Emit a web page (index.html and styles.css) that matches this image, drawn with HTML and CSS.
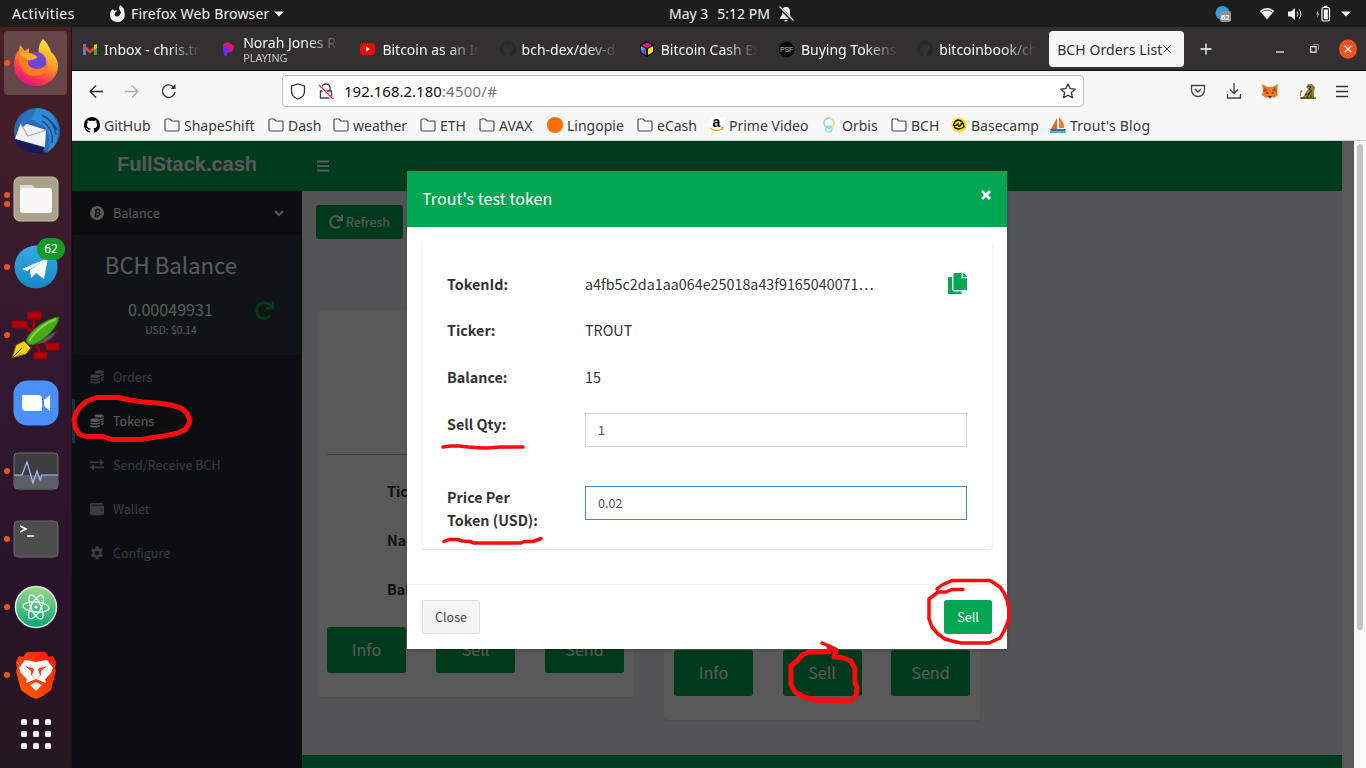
FILE: index.html
```html
<!DOCTYPE html>
<html lang="en">
<head>
<meta charset="utf-8">
<title>BCH Orders List</title>
<link rel="stylesheet" href="styles.css">
</head>
<body>
<svg class="defs" width="0" height="0" aria-hidden="true">
  <symbol id="folder" viewBox="0 0 16 16"><path d="M1 3.500Q1 2 2.500 2H6l2 2h5.500Q15 4 15 5.500v7q0 1.500-1.500 1.500h-11Q1 14 1 12.500z" fill="none" stroke="#4b4b50" stroke-width="1.200"/></symbol>
  <symbol id="github" viewBox="0 0 16 16"><path d="M8 0C3.58 0 0 3.58 0 8c0 3.54 2.29 6.53 5.47 7.59.4.07.55-.17.55-.38 0-.19-.01-.82-.01-1.49-2.01.37-2.53-.49-2.69-.94-.09-.23-.48-.94-.82-1.13-.28-.15-.68-.52-.01-.53.63-.01 1.08.58 1.23.82.72 1.21 1.87.87 2.33.66.07-.52.28-.87.51-1.07-1.78-.2-3.64-.89-3.64-3.95 0-.87.31-1.59.82-2.15-.08-.2-.36-1.02.08-2.12 0 0 .67-.21 2.2.82.64-.18 1.32-.27 2-.27s1.36.09 2 .27c1.53-1.04 2.2-.82 2.2-.82.44 1.1.16 1.92.08 2.12.51.56.82 1.27.82 2.15 0 3.07-1.87 3.75-3.65 3.95.29.25.54.73.54 1.48 0 1.07-.01 1.93-.01 2.2 0 .21.15.46.55.38A8.01 8.01 0 0 0 16 8c0-4.42-3.58-8-8-8z"/></symbol>
  <symbol id="redo" viewBox="0 0 512 512"><path d="M500.33 0h-47.41a12 12 0 0 0-12 12.57l4 82.76A247.42 247.42 0 0 0 256 8C119.34 8 7.9 119.53 8 256.19 8.1 393.07 119.1 504 256 504a247.1 247.1 0 0 0 166.18-63.91 12 12 0 0 0 .48-17.43l-34-34a12 12 0 0 0-16.38-.55A176 176 0 1 1 402.1 157.8l-101.53-4.87a12 12 0 0 0-12.57 12v47.41a12 12 0 0 0 12 12h200.33a12 12 0 0 0 12-12V12a12 12 0 0 0-12-12z"/></symbol>
  <symbol id="coins" viewBox="0 0 16 16"><ellipse cx="10.500" cy="2.200" rx="5.200" ry="1.900"/><path d="M11.200 5.300c2 0 4.500-.5 4.500-1.500v1.700c0 .9-1.800 1.500-3.600 1.600zM12.600 8.200c1.600-.2 3.100-.7 3.100-1.600v1.700c0 .8-1.400 1.400-3.100 1.600zM12.600 11c1.600-.2 3.100-.7 3.100-1.500v1.600c0 .9-1.400 1.400-3.100 1.600z"/><ellipse cx="5.800" cy="7" rx="5.500" ry="2.200"/><path d="M.3 9c1.500 1.700 9.500 1.700 11 0v1.400c0 2.300-11 2.300-11 0zM.3 12.200c1.500 1.700 9.500 1.700 11 0v1.500c0 2.400-11 2.400-11 0z"/></symbol>
</svg>

<header class="topbar">
  <span class="activities">Activities</span>
  <span class="app-menu">
    <svg width="16" height="18" viewBox="0 0 16 18"><path d="M8 17A7 7 0 0 1 1 10C1 7 2 5 4 4l1 2 3-1-1 3 2 3 3-3c0-2-2-3-2-5l1-3c3 2 4.500 4 4.500 8A7 7 0 0 1 8 17z" fill="#f2f2f2"/><circle cx="8.200" cy="9" r="2.500" fill="#1d1d1d"/></svg>
    <span class="app-name">Firefox Web Browser</span>
    <svg width="10" height="6" viewBox="0 0 10 6"><path d="M0 .5h10L5 5.500z" fill="#f2f2f2"/></svg>
  </span>
  <span class="clock"><span>May 3</span><span>5:12 PM</span>
    <svg width="16" height="16" viewBox="0 0 16 16"><path d="M8 1c3 0 4 2 4 5v3l2.500 4h-13L4 9V6c0-3 1-5 4-5zM6 14h4q-2 3-4 0z" fill="#e8e8e8"/><path d="M1 1l14 14" stroke="#1d1d1d" stroke-width="3"/><path d="M1.500 .5l14 14" stroke="#eee" stroke-width="1.200"/></svg>
  </span>
  <span class="tray">
    <svg width="16" height="18" viewBox="0 0 16 18"><circle cx="7.500" cy="8" r="7" fill="#2ba0dc"/><rect x="5" y="6" width="11" height="11" rx="2" fill="#909090"/><text x="6" y="15" font-size="7.500" fill="#fff" class="tray-num">62</text></svg>
    <svg width="16" height="13" viewBox="0 0 16 13"><path d="M.8 4Q8-2 15.200 4L8 12.500z" fill="#f2f2f2"/><path d="M2.500 5.200Q8 1 13.500 5.200" stroke="#1d1d1d" stroke-width=".8" fill="none"/></svg>
    <svg width="16" height="14" viewBox="0 0 16 14"><path d="M1 4.500h3L8 1v12L4 9.500H1z" fill="#f2f2f2"/><path d="M10 4.500q2 2.500 0 5M12.200 2.500q3.400 4.500 0 9" stroke="#ddd" fill="none"/></svg>
    <svg width="16" height="17" viewBox="0 0 16 17"><path d="M3.500 5L1 9.500h1.500L2 13l2.500-4.500H3z" fill="#aaa"/><rect x="7" y="2.500" width="7.500" height="13.500" rx="1.500" fill="none" stroke="#fff" stroke-width="1.200"/><path d="M9 .8h3.500v1.500H9zM8.800 4.500h4v9.700h-4z" fill="#fff"/></svg>
    <svg width="10" height="6" viewBox="0 0 10 6"><path d="M0 .5h10L5 5.500z" fill="#f2f2f2"/></svg>
  </span>
</header>

<div class="desktop">
<nav class="dock">
  <div class="dock-item current"><i class="dots"></i>
    <svg width="46" height="48" viewBox="0 0 46 48"><defs><linearGradient id="ff" x1=".8" y1="0" x2=".3" y2="1"><stop offset="0" stop-color="#fff14a"/><stop offset=".45" stop-color="#ff9820"/><stop offset=".75" stop-color="#ff3a4a"/><stop offset="1" stop-color="#e0108a"/></linearGradient></defs><path d="M30 1c5 5 7 9 8 13 3 2 7 8 7 14a22 20 0 0 1-44 0C1 20 3 15 6 12l1-5 5 6 4-3v7h10c-1-7 0-11 4-16z" fill="url(#ff)"/><circle cx="23.500" cy="24" r="10" fill="#6f45d8"/><path d="M6 17q8-5 17 1-1 4-8 4-1 8 8 9 10 0 11-8 3 14-12 15C10 38 6 28 6 17z" fill="#ff7b20"/><path d="M6 16q8-4 19 3-5 4-10 3z" fill="#ffb028"/></svg></div>
  <div class="dock-item">
    <svg width="48" height="48" viewBox="0 0 48 48"><circle cx="25" cy="24" r="23" fill="#2769b5"/><path d="M12 8C18 0 33-1 40 8c8 9 7 24 2 31l-7 7c4-8 3-19-2-26z" fill="#2f8bd5"/><path d="M30 8q13 7 14 20M30 14q12 8 10 22M34 10q8 6 11 13" stroke="#174987" stroke-width="1.500" fill="none"/><path d="M3 32L9 15l25 8 -1 17z" fill="#f1f1f4"/><path d="M8 16l8 13 18-6" fill="none" stroke="#aab" stroke-width="1.200"/><path d="M3 32l30 9-2 2 2 4C14 48 4 41 3 32z" fill="#1c1a4f"/><path d="M8 16Q12 2 24 2q-3 11-13 18z" fill="#2b72ba"/></svg></div>
  <div class="dock-item"><i class="dots two"></i>
    <svg width="46" height="46" viewBox="0 0 46 46"><rect x="1" y="1" width="44" height="44" rx="6" fill="#a9a18c" stroke="#c6c0b0"/><path d="M7 13V9h12l4 4z" fill="#dedacf"/><rect x="7" y="12" width="32" height="25" rx="3" fill="#f8f7f5"/></svg></div>
  <div class="dock-item"><i class="dots"></i>
    <svg width="44" height="44" viewBox="0 0 44 44"><defs><linearGradient id="tg" x2="0" y2="1"><stop stop-color="#38aae5"/><stop offset="1" stop-color="#1686c5"/></linearGradient></defs><circle cx="22" cy="22" r="21.500" fill="url(#tg)"/><path d="M8 24L34 13l-4 21-8-6-5 5-1-8 12-8-15 9z" fill="#fff"/></svg>
    <b class="badge">62</b></div>
  <div class="dock-item"><i class="dots"></i>
    <svg width="50" height="50" viewBox="0 0 50 50"><g stroke="#a00008" stroke-width="3"><path d="M12 14l26 22M23 6v20l6 18"/></g><g fill="#b60009" stroke="#82080b"><path d="M16.500 2h14v7h-14zM1 11h15v7H1zM35 33h13v7H35zM23 42h13v7H23z"/></g><path d="M46 21Q38 35 22 34z" fill="#625060"/><path d="M48 7C36 8 18 20 15 31q3 6 9 3C36 28 47 17 48 7z" fill="#48aa16" stroke="#226e0b"/><path d="M45 9Q27 16 18 31" fill="none" stroke="#8bd34a" stroke-width="2"/><path d="M13 31l7 7-5 6L1 48l4-13z" fill="#f2cc20" stroke="#765307"/><path d="M2 47l9-9" stroke="#654b09"/></svg></div>
  <div class="dock-item">
    <svg width="46" height="46" viewBox="0 0 46 46"><rect x=".5" y=".5" width="45" height="45" rx="14" fill="#4b8ff8"/><path d="M9 15h16q4 0 4 4v12H13q-4 0-4-4zM31 20l6-5v16l-6-5z" fill="#fff"/></svg></div>
  <div class="dock-item"><i class="dots"></i>
    <svg width="46" height="38" viewBox="0 0 46 38"><rect x="1" y="1" width="44" height="36" rx="4" fill="#3b3d3e" stroke="#727272"/><path d="M2 23h42v13H2z" fill="#596068"/><path d="M1 23h8l5-13 6 21 4-12 3 9 2-5h16" fill="none" stroke="#a9c1f3" stroke-width="1.200"/></svg></div>
  <div class="dock-item"><i class="dots"></i>
    <svg width="46" height="38" viewBox="0 0 46 38"><rect x="1" y="1" width="44" height="36" rx="4" fill="#4c4c4c" stroke="#696969"/><path d="M7 6l6 3-6 3M14 16h7" fill="none" stroke="#fff" stroke-width="1.600"/></svg></div>
  <div class="dock-item"><i class="dots"></i>
    <svg width="44" height="44" viewBox="0 0 44 44"><defs><linearGradient id="at" x2="0" y2="1"><stop stop-color="#9bd98a"/><stop offset="1" stop-color="#0ba477"/></linearGradient></defs><circle cx="22" cy="22" r="20.500" fill="url(#at)" stroke="#e5e5e5" stroke-width="1.500"/><g fill="none" stroke="#eafff1" stroke-width="1.300"><ellipse cx="22" cy="22" rx="13" ry="5" transform="rotate(5 22 22)"/><ellipse cx="22" cy="22" rx="13" ry="5" transform="rotate(65 22 22)"/><ellipse cx="22" cy="22" rx="13" ry="5" transform="rotate(118 22 22)"/></g><circle cx="22" cy="22" r="1.600" fill="#fff"/></svg></div>
  <div class="dock-item"><i class="dots"></i>
    <svg width="42" height="48" viewBox="0 0 42 48"><defs><linearGradient id="br" x1="0" y1="1" x2="1" y2="0"><stop stop-color="#ff6200"/><stop offset="1" stop-color="#ff1808"/></linearGradient></defs><path d="M12 1h18l4 5 4-1 3 6-1 6 1 3-5 19-8 6-7 3-7-3-8-6L1 20l1-3-1-6 3-6 4 1z" fill="url(#br)"/><path d="M10 9l6 1 5 1 5-1 6-1 6 8-2 5-6 6 1 4-5-2-5-2-5 2-5 2 1-4-6-6-2-5z" fill="#fff"/><path d="M10 15l8 2 1 2-2 5 4 4 4-4-2-5 1-2 8-2-6 5 0 4-5 4-5-4 0-4z" fill="#f44322"/><path d="M21 31l6 3-6 6-6-6z" fill="#eee"/></svg></div>
  <div class="dock-item apps">
    <svg width="30" height="30" viewBox="0 0 30 30" fill="#eee"><g id="r"><rect width="6" height="6" rx="1.500"/><rect x="12" width="6" height="6" rx="1.500"/><rect x="24" width="6" height="6" rx="1.500"/></g><use href="#r" y="12"/><use href="#r" y="24"/></svg></div>
</nav>

<main class="browser">
  <div class="tabs">
    <div class="tab"><svg width="16" height="16" viewBox="0 0 16 16"><path d="M1 3h3v11H1z" fill="#4285f4"/><path d="M12 5h3v9h-3z" fill="#34a853"/><path d="M1 3l7 6 7-6v4l-7 5.500L1 7z" fill="#ea4335"/><path d="M12 4l3-1v4l-3 2z" fill="#fbbc04"/></svg><span class="fade">Inbox - chris.tro</span></div>
    <div class="tab"><svg width="16" height="16" viewBox="0 0 16 16"><path d="M2 3l5-2 6 4-1 5-6 2-1 3-2-1z" fill="#e0186a"/><path d="M2 3l7 6-4 6-2-1z" fill="#6b2aff"/></svg><span class="fade two-line"><span class="title">Norah Jones R</span><small>PLAYING</small></span></div>
    <div class="tab"><svg width="16" height="16" viewBox="0 0 16 16"><rect y="2" width="15" height="12" rx="3" fill="#f00"/><path d="M6 5.500l4 2.500-4 2.500z" fill="#fff"/></svg><span class="fade">Bitcoin as an In</span></div>
    <div class="tab"><svg class="gh-dark" width="16" height="16"><use href="#github"/></svg><span class="fade">bch-dex/dev-d</span></div>
    <div class="tab"><svg width="16" height="16" viewBox="0 0 16 16"><path d="M8 0l7 4v8l-7 4-7-4V4z" fill="#090909"/><path d="M8 1.500L13 4 8 7 3 4z" fill="#f0148e"/><path d="M2 5l5 3v6l-5-3z" fill="#19bddb"/><path d="M2 9l5-1v6l-4-2z" fill="#8e32d8"/><path d="M9 8l5-3v6l-5 3z" fill="#ffe500"/></svg><span class="fade">Bitcoin Cash Ex</span></div>
    <div class="tab"><svg width="17" height="17" viewBox="0 0 16 16"><circle cx="8" cy="8" r="7.500" fill="#050505" stroke="#16323e" stroke-width=".6"/><text x="1.800" y="10.500" class="psf">PSF</text></svg><span class="fade">Buying Tokens</span></div>
    <div class="tab"><svg class="gh-dark" width="16" height="16"><use href="#github"/></svg><span class="fade">bitcoinbook/ch</span></div>
    <div class="tab active"><span>BCH Orders List</span><svg width="8" height="8" viewBox="0 0 8 8"><path d="M.5.5l7 7m0-7l-7 7" stroke="#444"/></svg></div>
    <svg class="plus" width="12" height="12" viewBox="0 0 12 12"><path d="M6 .5v11M.5 6h11" stroke="#fff" stroke-width="1.300"/></svg>
    <div class="win"><svg width="8" height="9" viewBox="0 0 8 9"><path d="M0 8h8" stroke="#eee" stroke-width="1.300"/></svg>
      <svg width="9" height="9" viewBox="0 0 9 9"><path d="M.6 2.600h5.500v5.500H.6z" fill="none" stroke="#eee" stroke-width="1.200"/><path d="M3 .5h5.500V6" fill="none" stroke="#aaa" stroke-width=".8"/></svg>
      <svg width="18" height="20" viewBox="0 0 18 20"><ellipse cx="9" cy="10" rx="9" ry="9.800" fill="#e95420"/><path d="M5.700 6.700l6.600 6.600m0-6.600l-6.600 6.600" stroke="#fff" stroke-width="1.300"/></svg></div>
  </div>

  <div class="toolbar">
    <div class="nav-buttons">
      <svg width="14" height="13" viewBox="0 0 14 13"><path d="M7 .5L1 6.500l6 6M1 6.500h13" fill="none" stroke="#2b2b2b" stroke-width="1.300"/></svg>
      <svg width="14" height="13" viewBox="0 0 14 13"><path d="M7 .5l6 6-6 6M13 6.500H0" fill="none" stroke="#aaa" stroke-width="1.300"/></svg>
      <svg width="16" height="16" viewBox="0 0 16 16"><path d="M14 9A6.300 6.300 0 1 1 12 3.500L14 5.500" fill="none" stroke="#333" stroke-width="1.400"/><path d="M14.500 1v5h-5z" fill="#333"/></svg>
    </div>
    <div class="urlbar">
      <svg width="16" height="17" viewBox="0 0 16 17"><path d="M8 1l6.500 2v5c0 4-3 7-6.500 8-3.500-1-6.500-4-6.500-8V3z" fill="none" stroke="#333" stroke-width="1.300"/></svg>
      <svg width="16" height="17" viewBox="0 0 16 17"><path d="M4 8V5q0-4 4-4t4 4v3M2.500 8h11v7h-11z" fill="none" stroke="#444" stroke-width="1.400"/><path d="M1 2l13 14" stroke="#f9f9f9" stroke-width="3"/><path d="M1 2l14 14" stroke="#e22850" stroke-width="1.300"/></svg>
      <span class="url">192.168.2.180<em>:4500/#</em></span>
      <svg class="star" width="16" height="16" viewBox="0 0 16 16"><path d="M8 1l2.100 4.600 5 .6-3.700 3.400 1 5L8 12.200l-4.400 2.400 1-5L.9 6.200l5-.6z" fill="none" stroke="#333" stroke-width="1.300" stroke-linejoin="round"/></svg>
    </div>
    <div class="actions">
      <svg width="16" height="16" viewBox="0 0 16 16"><path d="M1.500 2.500h13V7c0 4-3 6.500-6.500 6.500S1.500 11 1.500 7z" fill="none" stroke="#444" stroke-width="1.300"/><path d="M5 6l3 3 3-3" fill="none" stroke="#444" stroke-width="1.400"/></svg>
      <svg width="16" height="16" viewBox="0 0 16 16"><path d="M8 0v10M4 6.500l4 4 4-4M1.500 11v4h13v-4" fill="none" stroke="#444" stroke-width="1.300"/></svg>
      <svg width="18" height="17" viewBox="0 0 18 17"><path d="M1 1l6 3h4l6-3-1 7 1 4-4 3-2-1-2 2-2-2-2 1-4-3 1-4z" fill="#ec7923"/><path d="M4 4l3 4-5 1zM14 4l-3 4 5 1z" fill="#b9500e"/><path d="M4.500 9l3 1-1 1zM13.500 9l-3 1 1 1zM7 13h4l-2 2z" fill="#222"/></svg>
      <svg width="17" height="17" viewBox="0 0 17 17"><path d="M9 1h4l3 3-1 5v5h2v2H1v-2h3l3-5 2-3-2-2zM1 13V9l1-2 2 1-2 2v3z" fill="#94802c"/><path d="M9 3l3 1-2 2 3 2-4 3M6 12l5-2-3 4M12 11v3M2 15h13" stroke="#332c12" fill="none"/></svg>
      <svg width="14" height="13" viewBox="0 0 14 13"><path d="M1 1.500h12M1 6.500h12M1 11.500h12" stroke="#333" stroke-width="1.300"/></svg>
    </div>
  </div>

  <div class="bookmarks">
    <a><svg width="16" height="16"><use href="#github"/></svg><span>GitHub</span></a>
    <a><svg width="16" height="16"><use href="#folder"/></svg><span>ShapeShift</span></a>
    <a><svg width="16" height="16"><use href="#folder"/></svg><span>Dash</span></a>
    <a><svg width="16" height="16"><use href="#folder"/></svg><span>weather</span></a>
    <a><svg width="16" height="16"><use href="#folder"/></svg><span>ETH</span></a>
    <a><svg width="16" height="16"><use href="#folder"/></svg><span>AVAX</span></a>
    <a><svg width="16" height="16"><circle cx="8" cy="8" r="8" fill="#ff6d00"/></svg><span>Lingopie</span></a>
    <a><svg width="16" height="16"><use href="#folder"/></svg><span>eCash</span></a>
    <a><svg width="16" height="16"><rect width="16" height="16" fill="#fff"/><text x="3.500" y="9.500" class="amazon">a</text><path d="M1 11q6 4.500 12 1m-1-1.500l2 0-.5 2.500" fill="none" stroke="#ffa51f" stroke-width="1.300"/></svg><span>Prime Video</span></a>
    <a><svg width="16" height="16" fill="none" stroke-width="1.300"><circle cx="7" cy="6" r="5" stroke="#89c6ff"/><path d="M7 1a5 5 0 0 1 2 9.500" stroke="#d9f46a"/><circle cx="7" cy="12" r="3" stroke="#79eccc"/></svg><span>Orbis</span></a>
    <a><svg width="16" height="16"><use href="#folder"/></svg><span>BCH</span></a>
    <a><svg width="16" height="16"><circle cx="8" cy="8" r="7.500" fill="#ffe500"/><path d="M3 9q3-1 4-2 0 3 2 2l2-3M3 10q4 4 10 0-1-7-6-7-4 1-4.500 6" fill="none" stroke="#111" stroke-width="1.400"/></svg><span>Basecamp</span></a>
    <a><svg width="16" height="16"><path d="M7 1v11H1z" fill="#e3662c"/><path d="M9 0q6 6 5 11H9z" fill="#ef7b39"/><path d="M0 12h16l-2 4H2z" fill="#35719e"/><path d="M0 15h16" stroke="#4ab4c9" stroke-width="2"/></svg><span class="wide">Trout's Blog</span></a>
  </div>

  <div class="viewport">
    <div class="page">
      <div class="page-head"><div class="logo">FullStack.cash</div>
        <svg width="12" height="12" viewBox="0 0 12 12"><path d="M0 1.500h12M0 6h12M0 10.500h12" stroke="#fff" stroke-width="1.900"/></svg></div>
      <div class="page-body">
        <aside class="sidebar">
          <div class="side-row open"><svg width="14" height="14" viewBox="0 0 14 14"><circle cx="7" cy="7" r="7" fill="#fff"/><path d="M5 4l3.200-.4q1.800 0 1.500 1.600-.3 1-1.400 1.300 1.700.2 1.400 1.900-.4 1.500-2.200 1.500l-2.800.2M6 4l-.4 6M6 6.800h2.500M6.500 2.700v1.500M8 2.500v1.500M5.800 9.800v1.600M7.400 9.800v1.600" fill="none" stroke="#1e282c" stroke-width="1.200"/></svg><span>Balance</span>
            <svg class="chev" width="10" height="7" viewBox="0 0 10 7"><path class="line" d="M1 1l4 4 4-4"/></svg></div>
          <div class="balance">
            <h2>BCH Balance</h2>
            <div class="amount"><span>0.00049931</span><svg width="19" height="19"><use href="#redo"/></svg></div>
            <small>USD: $0.14</small>
          </div>
          <div class="side-row"><svg width="14" height="14"><use href="#coins"/></svg><span>Orders</span></div>
          <div class="side-row selected"><svg width="14" height="14"><use href="#coins"/></svg><span>Tokens</span></div>
          <div class="side-row"><svg width="14" height="12" viewBox="0 0 14 12"><path d="M0 2.500h10V.3L14 3.300l-4 3V4H0zM14 7.500H4V5.400L0 8.500l4 3V9.200h10z"/></svg><span>Send/Receive BCH</span></div>
          <div class="side-row"><svg width="14" height="14" viewBox="0 0 512 512"><path d="M461.2 128H80c-8.84 0-16-7.16-16-16s7.16-16 16-16h384c8.84 0 16-7.16 16-16 0-26.51-21.49-48-48-48H64C28.65 32 0 60.65 0 96v320c0 35.35 28.65 64 64 64h397.2c28.02 0 50.8-21.53 50.8-48V176c0-26.47-22.78-48-50.8-48zM416 336c-17.67 0-32-14.33-32-32s14.33-32 32-32 32 14.33 32 32-14.33 32-32 32z"/></svg><span>Wallet</span></div>
          <div class="side-row"><svg width="14" height="14" viewBox="0 0 14 14"><path fill-rule="evenodd" d="M5.700.3h2.600l.4 1.900 1.200.7 1.800-.6L13 4.600l-1.400 1.200v2l1.400 1.200-1.300 2.300-1.800-.6-1.200.7-.4 2.100H5.700l-.4-2.100-1.200-.7-1.800.6L1 9l1.400-1.200v-2L1 4.600l1.300-2.300 1.800.6 1.200-.7zM7 4.700a2.200 2.200 0 1 0 0 4.400 2.200 2.200 0 0 0 0-4.400z"/></svg><span>Configure</span></div>
        </aside>
        <section class="content">
          <div class="content-main">
            <button class="btn refresh"><svg width="14" height="14"><use href="#redo"/></svg>Refresh</button>
            <div class="cards">
              <article class="card">
                <div class="token-icon"></div>
                <dl><dt>Ticker:</dt><dt>Name:</dt><dt>Balance:</dt></dl>
                <div class="card-buttons"><button class="btn">Info</button><button class="btn">Sell</button><button class="btn">Send</button></div>
              </article>
              <article class="card tall">
                <div class="token-icon"></div>
                <dl><dt>Ticker:</dt><dt>Name:</dt><dt>Balance:</dt></dl>
                <div class="card-buttons"><button class="btn">Info</button><button class="btn">Sell</button><button class="btn">Send</button></div>
              </article>
            </div>
          </div>
          <div class="page-foot"></div>
        </section>
      </div>
    </div>
    <div class="gutter"></div>
    <div class="backdrop"></div>
    <div class="scrollbar"><div class="thumb"></div></div>

    <div class="modal">
      <div class="modal-head"><span>Trout's test token</span><svg width="10" height="10" viewBox="0 0 10 10"><path d="M1 1l8 8m0-8L1 9" stroke="#fff" stroke-width="2.700"/></svg></div>
      <div class="modal-body">
        <div class="form-box">
          <div class="row first"><label>TokenId:</label><span>a4fb5c2da1aa064e25018a43f9165040071…</span><svg class="copy" width="19" height="21" viewBox="0 0 448 512" preserveAspectRatio="none"><path d="M320 448v40c0 13.255-10.745 24-24 24H24c-13.255 0-24-10.745-24-24V120c0-13.255 10.745-24 24-24h72v296c0 30.879 25.121 56 56 56h168zm0-344V0H152c-13.255 0-24 10.745-24 24v368c0 13.255 10.745 24 24 24h272c13.255 0 24-10.745 24-24V128H344c-13.2 0-24-10.8-24-24zm120.971-31.029L375.029 7.029A24 24 0 0 0 358.059 0H352v96h96v-6.059a24 24 0 0 0-7.029-16.97z"/></svg></div>
          <div class="row"><label>Ticker:</label><span>TROUT</span></div>
          <div class="row"><label>Balance:</label><span>15</span></div>
          <div class="row field"><label>Sell Qty:</label><div class="input">1</div></div>
          <div class="row field"><label>Price Per Token (USD):</label><div class="input focus">0.02</div></div>
        </div>
      </div>
      <div class="modal-foot"><button class="btn plain">Close</button><button class="btn">Sell</button></div>
    </div>
  </div>
</main>
</div>

<svg class="marks" width="1366" height="768" viewBox="0 0 1366 768" fill="none" stroke="#fb0d0d" stroke-linecap="round" stroke-linejoin="round">
  <path stroke-width="5" d="M114 397.500H97L87 401L80 407L76 413L74 420L75 427L79 434L86 436.500H103L112 439.500H142L153 437.500L164 436L178 433L186 429L190 421L187 413L181 408L171 405L157 403L143 402L130 400L118 397.500Z"/>
  <path stroke-width="3.500" d="M443 447L451 446H459L468 447L482 448H488L500 447L523 447"/>
  <path stroke-width="3.500" d="M444 541.500L449 539.500H458L462 541L470 541.500L474 543H521L524 541.500H533L537 540L541 538.500"/>
  <path stroke-width="3.500" d="M963 589.500H952L946 592H938L929 599V619L932 627L938 634L945 639L952 641L961 643H989L1000 638L1004 631L1007 624L1009 618V610L1007 600L1004 593L1000 587L990 580.500H952L942 585L937 589"/>
  <path stroke-width="5" d="M829 652H809L802 655L798 660L791 666V685L795 692L804 697L816 700L842 700.500L850 701L856 696L857 688L855 682V669L851 661L842 657.500L834 657L836 650L829 647"/>
  <path stroke-width="3.500" d="M822 643L829 646L835 650"/>
</svg>
</body>
</html>
```
FILE: styles.css
```css
* { box-sizing: border-box; }
body {
  margin: 0;
  width: 1366px;
  height: 768px;
  overflow: hidden;
  position: relative;
  font-family: "Noto Sans", sans-serif;
  font-size: 14px;
  background: #1d1d1d;
}
svg { display: block; flex: none; }
.defs { position: absolute; }

/* desktop bar */
.topbar {
  height: 27px;
  display: grid;
  grid-template-columns: 109px 560px 546px 1fr;
  align-items: center;
  color: #f2f2f2;
  line-height: 27px;
  background: #1d1d1d;
}
.activities { padding-left: 12px; letter-spacing: .45px; }
.app-menu, .clock, .tray { display: flex; align-items: center; }
.app-name { margin: 0 5px 0 6px; letter-spacing: .16px; }
.clock span { margin-right: 9px; white-space: nowrap; }
.clock span + span { margin-right: 8px; }
.tray svg:nth-child(1) { margin-right: 28px; }
.tray svg:nth-child(2) { margin-right: 12px; }
.tray svg:nth-child(3) { margin-right: 12px; }
.tray svg:nth-child(4) { margin-right: 10px; }
.tray-num { font-weight: bold; }

.desktop { display: flex; height: 741px; }
.dock {
  width: 72px;
  flex: none;
  padding: 4px;
  display: flex;
  flex-direction: column;
  gap: 4px;
  background: linear-gradient(#481f24 0, #3b1c2b 25%, #32182e 45%, #29142a 75%, #25171e);
  border-right: 1px solid #21121f;
}
.dock-item {
  position: relative;
  height: 64px;
  flex: none;
  display: flex;
  align-items: center;
  justify-content: center;
}
.dock-item.current { background: #674649; border-radius: 4px; padding-bottom: 2px; }
.dock-item.apps { height: 46px; }
.dots, .dots.two::after {
  position: absolute;
  left: 0;
  top: 29px;
  width: 6px;
  height: 6px;
  border-radius: 50%;
  background: #e95420;
}
.dots.two { top: 25px; }
.dots.two::after { content: ""; top: 9px; }
.badge {
  position: absolute;
  left: 33px;
  top: 3px;
  width: 28px;
  height: 22px;
  border-radius: 11px;
  background: #149a26;
  color: #fff;
  font-size: 12px;
  font-weight: 400;
  line-height: 22px;
  text-align: center;
}

/* browser chrome */
.browser { flex: 1; min-width: 0; display: flex; flex-direction: column; }
.tabs {
  height: 44px;
  flex: none;
  display: grid;
  grid-template-columns: repeat(6, 139.200px) 132px 135px 1fr auto;
  align-items: center;
  padding-left: 10px;
  background: #323031;
  border-bottom: 1px solid #0c0c0d;
  color: #f9f9fa;
}
.tab { display: flex; align-items: center; gap: 6px; min-width: 0; padding-top: 1px; }
.fade {
  width: 97px;
  overflow: hidden;
  white-space: nowrap;
  -webkit-mask-image: linear-gradient(90deg, #000 65%, transparent);
  mask-image: linear-gradient(90deg, #000 65%, transparent);
}
.two-line { display: flex; flex-direction: column; }
.two-line .title { line-height: 17px; }
.two-line small { font-size: 10.800px; line-height: 14px; color: #c8c8c8; }
.gh-dark { fill: #24292e; }
.psf { font: 6.500px "Liberation Sans", sans-serif; fill: #ccc; }
.tab.active {
  height: 36px;
  border-radius: 4px;
  background: #f7f7f7;
  color: #2d2d30;
  padding: 1px 0 0 8px;
  gap: 1px;
  letter-spacing: .1px;
  white-space: nowrap;
}
.plus { margin-left: 16px; }
.win { display: flex; align-items: center; gap: 20.500px; padding-right: 9px; }
.win svg:first-child { margin-right: 5px; }
.toolbar {
  height: 39px;
  flex: none;
  display: grid;
  grid-template-columns: 210px 802px 1fr;
  align-items: center;
  background: #f7f7f7;
  padding-top: 1px;
}
.nav-buttons { display: flex; align-items: center; gap: 22px; padding-left: 17px; }
.urlbar {
  height: 32px;
  border: 1px solid #bdbdbf;
  border-radius: 4px;
  background: #fff;
  display: flex;
  align-items: center;
  gap: 12px;
  padding: 0 7px;
}
.url { font-size: 14.900px; color: #0c0c0d; margin-left: -2px; letter-spacing: .05px; }
.url em { font-style: normal; color: #737378; letter-spacing: .3px; }
.star { margin-left: auto; }
.actions { display: flex; align-items: center; justify-content: space-between; padding: 0 17px 0 106px; }
.bookmarks {
  height: 31px;
  flex: none;
  display: grid;
  grid-template-columns: 80px 104px 65px 87px 59px 68px 90px 72px 113px 69px 60px 99px 1fr;
  align-items: center;
  padding-left: 12px;
  background: #f7f7f7;
  color: #38383d;
  border-bottom: 1px solid #ccc;
}
.bookmarks a { display: flex; align-items: center; gap: 4px; white-space: nowrap; }
.bookmarks .wide { letter-spacing: .2px; }
.amazon { font: bold 14px "Liberation Sans", sans-serif; }

/* page area */
.viewport {
  position: relative;
  flex: 1;
  min-height: 0;
  display: flex;
  font-family: "Noto Sans CJK JP", "Noto Sans CJK SC", sans-serif;
  font-size: 12.540px;
}
.page { width: 1270px; flex: none; display: flex; flex-direction: column; }
.gutter { width: 12px; flex: none; background: #fff; }
.backdrop { position: absolute; left: 0; right: 12px; top: 0; bottom: 0; background: rgba(0, 0, 0, .65); }
.scrollbar { width: 12px; flex: none; background: #f9f9f9; padding: 3px; }
.thumb { width: 6px; height: 486px; border-radius: 3px; background: #c2c2c2; }
.page-head { height: 50px; flex: none; display: flex; align-items: center; background: #00a651; }
.logo {
  width: 230px;
  margin-right: 15px;
  text-align: center;
  font: bold 20px/46px "Liberation Sans", sans-serif;
  height: 50px;
  color: #fff;
}
.page-body { flex: 1; min-height: 0; display: flex; }
.sidebar { width: 230px; flex: none; background: #222d32; }
.side-row {
  height: 44px;
  display: flex;
  align-items: center;
  gap: 9px;
  padding-left: 15px;
  border-left: 3px solid transparent;
  color: #a2b0b6;
}
.side-row span { padding-bottom: 2px; }
.side-row svg { fill: currentColor; }
.side-row.open { background: #1e282c; color: #fff; }
.side-row .chev { margin: 0 18px 0 auto; }
.line { fill: none; stroke: #fff; stroke-width: 2; }
.side-row.selected { background: #1e282c; border-left-color: #3c8dbc; color: #fff; }
.balance { height: 120px; margin: 0 1px; padding-top: 14px; background: #2c3b41; color: #fff; }
.balance h2 { margin: 0 32px 0 0; font-size: 22.200px; line-height: 31px; font-weight: 400; text-align: center; }
.balance small { display: block; margin-right: 32px; text-align: center; font-size: 10.300px; line-height: 14px; }
.amount { display: flex; align-items: center; height: 26px; margin-top: 17px; padding-left: 55px; font-size: 16.120px; }
.amount span { padding-bottom: 2px; width: 86px; }
.amount svg { margin-left: 41px; fill: #00a651; }
.content { flex: 1; display: flex; flex-direction: column; background: #ecf0f5; }
.content-main { flex: 1; padding: 14px; }
.page-foot { height: 13px; background: #00a651; }
.btn {
  font: inherit;
  color: #fff;
  background: #00a651;
  border: 0;
  border-radius: 3px;
  height: 34px;
  padding: 0 0 2px;
}
.refresh { width: 87px; display: flex; align-items: center; justify-content: center; gap: 3px; fill: #fff; }
.refresh svg { margin-top: 2px; }
.cards { display: flex; gap: 30px; margin-top: 72px; padding-left: 1px; align-items: flex-start; }
.card {
  width: 317px;
  height: 386px;
  border-radius: 3px;
  background: #fff;
  box-shadow: 0 1px 1px rgba(0, 0, 0, .1);
  padding: 0 10px;
}
.card.tall { height: 409px; width: 316px; }
.token-icon { height: 144px; border-bottom: 1px solid #b5b5b5; }
.card dl { margin: 0; padding: 11px 0 0 60px; font-size: 14.330px; font-weight: 700; line-height: 49px; height: 172px; color: #333; }
.tall dl { height: 195px; }
.card-buttons { display: grid; grid-template-columns: repeat(3, 79px); justify-content: space-between; }
.card-buttons .btn { height: 46px; font-size: 16.120px; }

/* dialog */
.modal {
  position: absolute;
  left: 335px;
  top: 30px;
  width: 600px;
  height: 478px;
  background: #fff;
  box-shadow: 0 2px 3px rgba(0, 0, 0, .125);
  color: #333;
  display: flex;
  flex-direction: column;
}
.modal-head {
  height: 56px;
  background: #00a651;
  color: #fff;
  font-size: 16.120px;
  display: flex;
  justify-content: space-between;
  align-items: center;
  padding: 0 16px 0 15px;
}
.modal-head span { padding-bottom: 2px; }
.modal-head svg { margin-bottom: 8px; }
.modal-body { flex: 1; padding: 15px; }
.form-box {
  height: 307px;
  padding: 30px 25px 0;
  border-radius: 3px;
  box-shadow: 0 1px 2px rgba(0, 0, 0, .13);
  font-size: 14.330px;
  line-height: 23px;
}
.row { display: flex; align-items: flex-start; height: 47px; }
.row.first { height: 46px; }
.row.field { height: 73px; }
.row label { width: 138px; padding-right: 30px; font-weight: 700; flex: none; }
.copy { fill: #00a651; margin: 1px 0 0 auto; }
.input {
  flex: 1;
  height: 34px;
  margin-top: 1px;
  border: 1px solid #d2d6de;
  padding-left: 12px;
  font-size: 12.540px;
  line-height: 32px;
  color: #555;
}
.input.focus { border-color: #3c8dbc; }
.modal-foot {
  height: 65px;
  border-top: 1px solid #f4f4f4;
  display: flex;
  justify-content: space-between;
  padding: 15px;
}
.modal-foot .btn { width: 48px; }
.modal-foot .plain { width: 58px; color: #444; background: #f4f4f4; border: 1px solid #ddd; }

/* pen marks over the page */
.marks { position: absolute; left: 0; top: 0; pointer-events: none; }
```
